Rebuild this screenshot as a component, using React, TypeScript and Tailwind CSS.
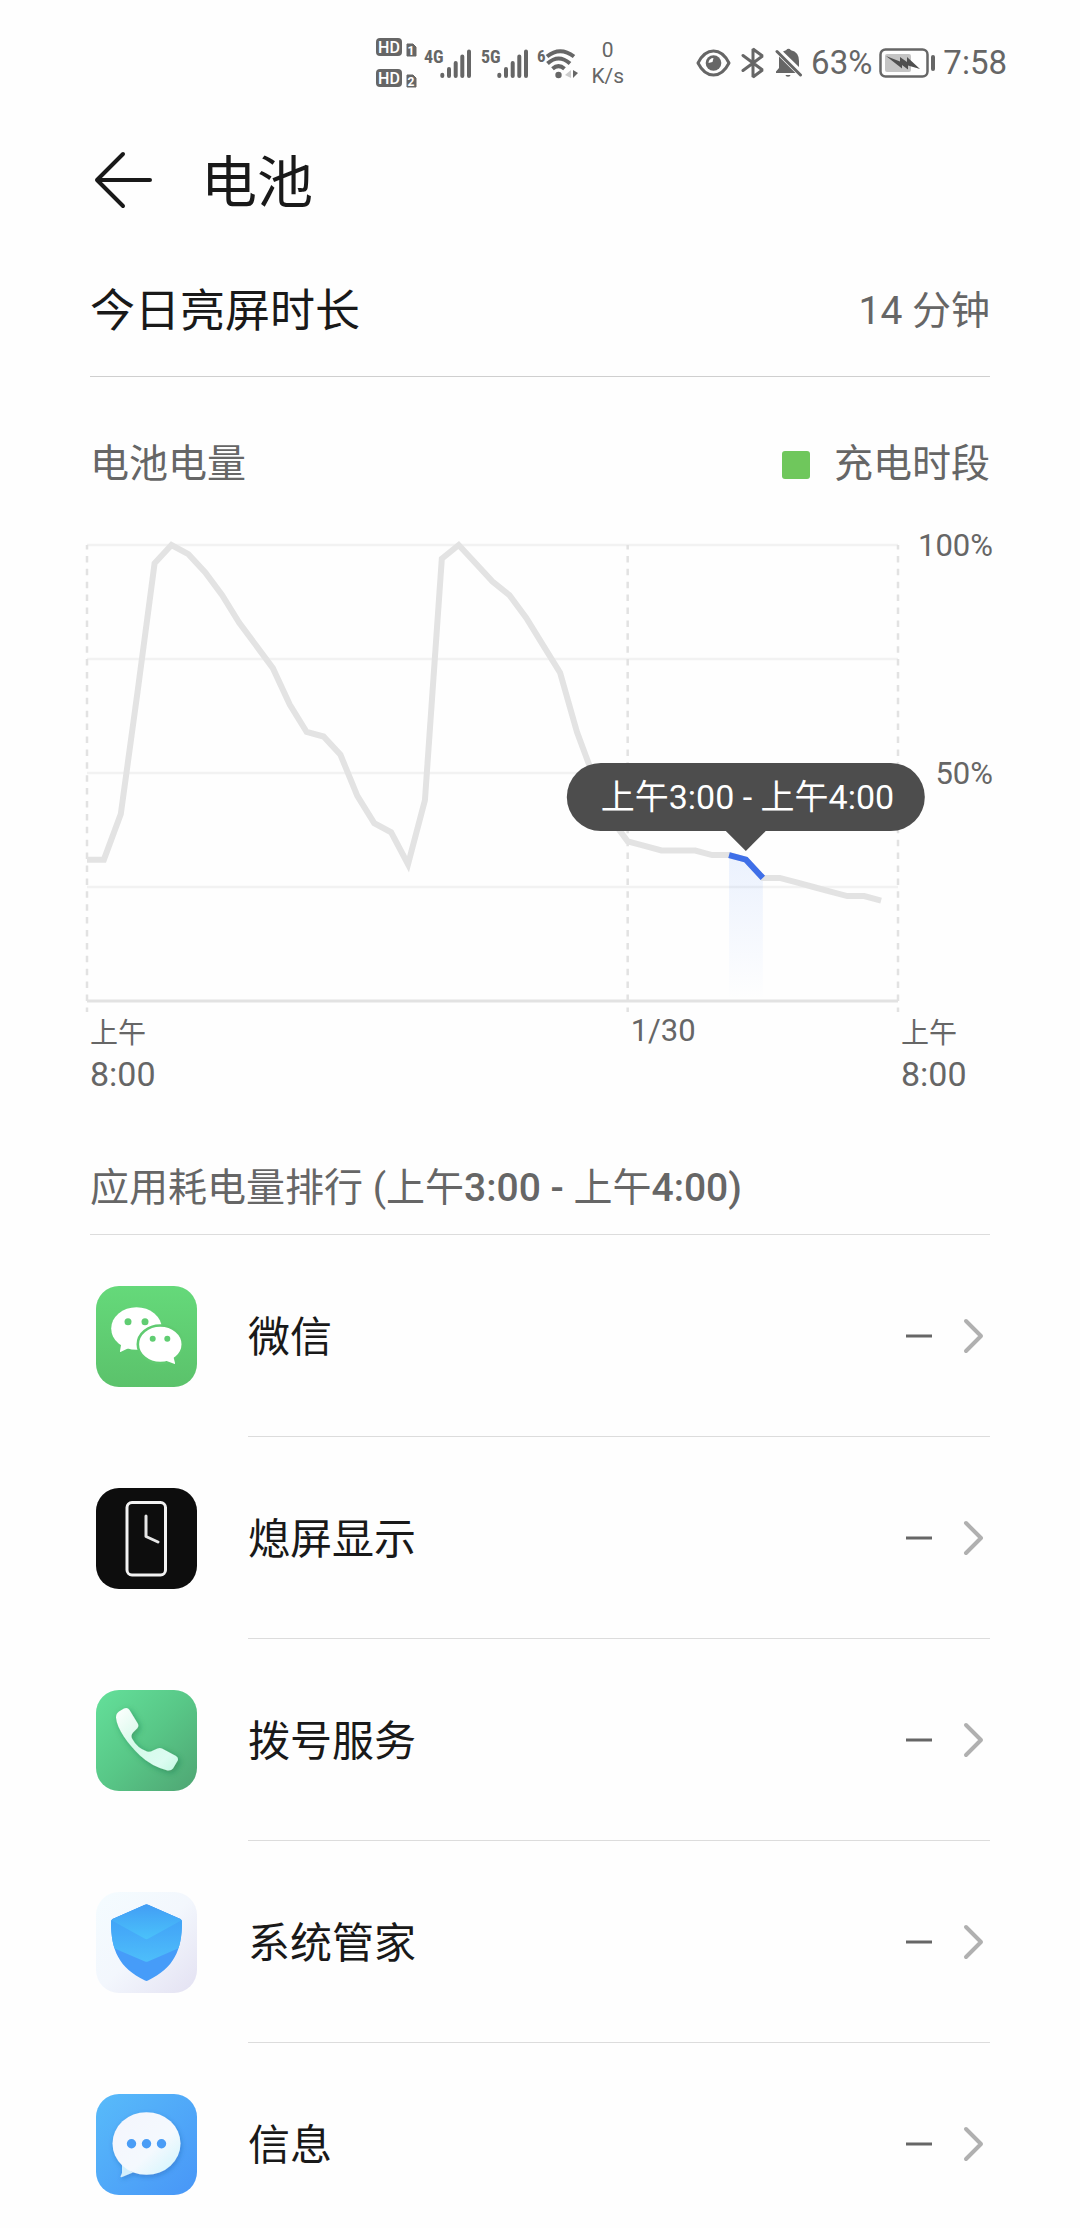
import React from 'react';

// battery level every half hour, from 8:00 two days ago
const LEVELS = [
  31, 31, 41, 68, 96, 100, 98, 94, 89, 83, 78, 73, 65, 59, 58, 54, 45, 39, 37, 30, 44, 97, 100, 96,
  92, 89, 84, 78, 72, 59, 49, 40, 35, 34, 33, 33, 33, 32, 32, 31, 27, 27, 26, 25, 24, 23, 23, 22,
];

const CHART_WIDTH = 811;
const CHART_TOP = 17;
const CHART_BOTTOM = 473;
const SELECTED_START = 38;
const SELECTED_END = 40;

const getX = (index: number) => (index * CHART_WIDTH) / 48;
const getY = (level: number) => CHART_TOP + ((100 - level) * (CHART_BOTTOM - CHART_TOP)) / 100;

const toPoints = (from: number, to: number) =>
  LEVELS.slice(from, to + 1)
    .map((level, i) => `${getX(from + i)},${getY(level)}`)
    .join(' ');

const HdBadge = ({ y, sim }: { y: number; sim: string }) => (
  <g>
    <rect x="0" y={y} width="26" height="18" rx="4" fill="#666" />
    <text x="13" y={y + 15} fontSize="16" fontWeight="500" fill="#fff" textAnchor="middle">
      HD
    </text>
    <path d={`M31 ${y + 6} h6 l3 3 v9 h-9 z`} fill="#666" stroke="#666" strokeLinejoin="round" />
    <text x="35" y={y + 17} fontSize="12" fontWeight="700" fill="#fff" textAnchor="middle">
      {sim}
    </text>
  </g>
);

const Signal = ({ label }: { label: string }) => (
  <svg width="50" height="34" viewBox="0 0 50 34" className="shrink-0">
    <text
      x="1"
      y="17"
      fontSize="18"
      fontWeight="700"
      fill="#666"
      className="font-['Liberation_Sans_Narrow','Roboto_Condensed',Roboto,sans-serif]"
    >
      {label}
    </text>
    <g stroke="#666" strokeWidth="4" strokeLinecap="round">
      <path d="M19.3 28.8v1.2M26 23v7M32.7 17v7v6M39.3 10.500v19.500M46 5.500v24.500" />
    </g>
  </svg>
);

const StatusBar = () => (
  <div className="flex h-[126px] items-center justify-end pr-[73px] text-[#666]">
    <svg width="41" height="52" viewBox="0 0 41 52" className="shrink-0">
      <HdBadge y={1} sim="1" />
      <HdBadge y={32} sim="2" />
    </svg>
    <div className="ml-[6px] flex items-center gap-[7px]">
      <Signal label="4G" />
      <Signal label="5G" />
      <svg width="42" height="34" viewBox="0 0 42 34" fill="none" className="shrink-0">
        <text
          x="0"
          y="16"
          fontSize="17"
          fontWeight="700"
          fill="#666"
          className="font-['Liberation_Sans_Narrow','Roboto_Condensed',Roboto,sans-serif]"
        >
          6
        </text>
        <g stroke="#666" strokeWidth="4">
          <path d="M10 10.500Q23 0 37 10.500" />
          <path d="M10.500 17.500Q21.500 7.500 33 17.500" />
          <path d="M15.500 22.800Q21.500 17.500 27.500 22.800" />
        </g>
        <circle cx="21.500" cy="29" r="3.200" fill="#666" />
        <path d="M34 24v8l-6-3z" fill="#ccc" />
        <path d="M36 24v8l5-5z" fill="#666" />
      </svg>
    </div>
    <div className="ml-3 text-center text-[21px] leading-[26px]">
      <div>0</div>
      <div>K/s</div>
    </div>
    <svg width="35" height="28" viewBox="0 0 35 28" fill="none" className="ml-[72px] shrink-0">
      <path
        d="M2 14C6 6 11 2 17.500 2S29 6 33 14C29 22 24 26 17.500 26S6 22 2 14z"
        stroke="#666"
        strokeWidth="3"
        strokeLinejoin="round"
      />
      <circle cx="17.500" cy="14" r="7.800" fill="#666" />
      <path d="M12.500 14a5 5 0 0 1 5-5l-1 4z" fill="#fff" />
    </svg>
    <svg width="24" height="32" viewBox="0 0 24 32" fill="none" className="ml-[10px] shrink-0">
      <path
        d="M2 8.500L21.500 23L12 30V2L21.500 9L2 23.500"
        stroke="#666"
        strokeWidth="3"
        strokeLinejoin="bevel"
        strokeLinecap="round"
      />
    </svg>
    <svg width="28" height="30" viewBox="0 0 28 30" className="ml-[10px] shrink-0">
      <path d="M8 3.500Q10 2.500 11 2.200Q13.500-.5 16 2.200Q24 4 24 13V19z" fill="#666" />
      <path d="M4 8.500L20.500 25H1V23.500L4 20z" fill="#666" />
      <path d="M2 3.500L25.500 27" stroke="#666" strokeWidth="3" strokeLinecap="round" />
      <path d="M10.500 27h5a2.500 1.800 0 0 1-5 0z" fill="#666" />
    </svg>
    <span className="ml-2 text-[33px]">63%</span>
    <svg width="56" height="30" viewBox="0 0 56 30" className="ml-[7px] shrink-0">
      <rect x="1.500" y="1.500" width="47" height="27" rx="5" fill="none" stroke="#666" strokeWidth="2.500" />
      <rect x="6" y="6" width="26" height="18" rx="2" fill="#c4c4c4" />
      <rect x="52" y="7" width="4" height="16" rx="2" fill="#666" />
      <path d="M7 8L21 13.500L21 9L28 14V9L41 21L29 17.500V21.500L23 17V20.500z" fill="#4f4f4f" />
    </svg>
    <span className="ml-2 text-[33px]">7:58</span>
  </div>
);

const BatteryChart = () => (
  <div className="grid grid-cols-[2fr_1fr_95px] px-[87px] text-[#666]">
    <div className="relative col-span-2">
      <svg viewBox="0 0 811 484" fill="none" className="block w-full overflow-visible">
        <defs>
          <linearGradient id="selected" x1="0" y1="0" x2="0" y2="1">
            <stop offset="0" stopColor="#3f7ff8" stopOpacity="0.1" />
            <stop offset="1" stopColor="#3f7ff8" stopOpacity="0" />
          </linearGradient>
        </defs>
        {[100, 75, 50, 25].map((level) => (
          <path key={level} d={`M0 ${getY(level)}H811`} stroke="#f2f2f2" strokeWidth="2.500" />
        ))}
        {[0, 32, 48].map((index) => (
          <path
            key={index}
            d={`M${getX(index)} ${CHART_TOP}V484`}
            stroke="#e2e2e2"
            strokeWidth="2.500"
            strokeDasharray="6.500 6.400"
            strokeDashoffset="2"
          />
        ))}
        <path d={`M0 ${CHART_BOTTOM}H811`} stroke="#e2e2e2" strokeWidth="3" />
        <polygon
          points={`${toPoints(SELECTED_START, SELECTED_END)} ${getX(SELECTED_END)},${CHART_BOTTOM} ${getX(SELECTED_START)},${CHART_BOTTOM}`}
          fill="url(#selected)"
        />
        <polyline points={toPoints(0, LEVELS.length - 1)} stroke="#e3e3e3" strokeWidth="6" />
        <polyline points={toPoints(SELECTED_START, SELECTED_END)} stroke="#3f6fe8" strokeWidth="6" />
      </svg>
      <div className="absolute left-[81.25%] top-[235px] flex -translate-x-1/2 flex-col items-center">
        <div className="whitespace-nowrap rounded-full bg-[#4d4d4d] pl-[34px] pr-[31px] pt-px text-[34px] leading-[67px] text-white">
          上午3:00 - 上午4:00
        </div>
        <svg width="40" height="20" viewBox="0 0 40 20" fill="#4d4d4d">
          <path d="M0 0H40L20 20z" />
        </svg>
      </div>
    </div>
    <div className="flex flex-col gap-[192px] text-right text-[31px] leading-9">
      <span>100%</span>
      <span>50%</span>
    </div>
    <div className="pl-[3px] pt-px leading-[41px]">
      <div className="text-[28px]">上午</div>
      <div className="text-[34px]">8:00</div>
    </div>
    <div className="pl-[3px] pt-px text-[31px] leading-9">1/30</div>
    <div className="pl-[3px] pt-px leading-[41px]">
      <div className="text-[28px]">上午</div>
      <div className="text-[34px]">8:00</div>
    </div>
  </div>
);

const WeChatIcon = () => (
  <svg width="101" height="101" viewBox="0 0 101 101">
    <defs>
      <linearGradient id="wechat" x1="0" y1="0" x2="0" y2="1">
        <stop offset="0" stopColor="#65d97a" />
        <stop offset="1" stopColor="#5bc26b" />
      </linearGradient>
    </defs>
    <rect width="101" height="101" rx="23" fill="url(#wechat)" />
    <ellipse cx="40.500" cy="42.500" rx="25.300" ry="21.300" fill="#fff" />
    <path d="M25.500 56L24 65q-.3 1.500 1 .8L36 60.500z" fill="#fff" />
    <circle cx="32" cy="35.700" r="3.500" fill="#60cd72" />
    <circle cx="49" cy="35.700" r="3.500" fill="#60cd72" />
    <ellipse cx="64.300" cy="58.300" rx="22.500" ry="18.800" fill="#fff" stroke="#60cb71" strokeWidth="2.600" />
    <path d="M77 69L79 77q.2 1.500-1 .8L68 74z" fill="#fff" />
    <circle cx="56.700" cy="52.700" r="3" fill="#60cd72" />
    <circle cx="71.300" cy="52.700" r="3" fill="#60cd72" />
  </svg>
);

const ScreenOffIcon = () => (
  <svg width="101" height="101" viewBox="0 0 101 101" fill="none">
    <rect width="101" height="101" rx="23" fill="#0d0d0d" />
    <rect x="31" y="14.500" width="38.500" height="72.500" rx="5" stroke="#f2f2f2" strokeWidth="3" />
    <path d="M50 28V48.500L62 54" stroke="#e6e6e6" strokeWidth="3" strokeLinecap="round" strokeLinejoin="round" />
  </svg>
);

const DialerIcon = () => (
  <svg width="101" height="101" viewBox="0 0 101 101">
    <defs>
      <linearGradient id="dialer" x1="0" y1="0" x2="1" y2="1">
        <stop offset="0" stopColor="#64e09a" />
        <stop offset="0.500" stopColor="#58c787" />
        <stop offset="1" stopColor="#4fa573" />
      </linearGradient>
      <linearGradient id="handset" x1="0" y1="0" x2="1" y2="1">
        <stop offset="0" stopColor="#ffffff" />
        <stop offset="0.450" stopColor="#d4f9e9" />
        <stop offset="0.800" stopColor="#dcfcf1" />
        <stop offset="1" stopColor="#c3f8e2" />
      </linearGradient>
      <filter id="handset-shadow" x="-20%" y="-20%" width="150%" height="150%">
        <feDropShadow dx="2" dy="2" stdDeviation="3" floodColor="#1f6b43" floodOpacity="0.450" />
      </filter>
    </defs>
    <rect width="101" height="101" rx="23" fill="url(#dialer)" />
    <path
      d="M20 27.500Q20 23.500 23 21.500L28 18.500Q31.500 17 33.500 20L42 34Q43 36 41.500 38L37 42.500Q34.500 45.500 36 48.500Q41 58 51 61.500Q54 62.500 57 60.500L61.500 58.500Q64 57.500 66 58.500L80 66Q82.500 67.500 82 70L77 78.500Q75 81 71.500 80.500Q55 76 44 65.500C32 54 21 39 20 27.500z"
      fill="url(#handset)"
      filter="url(#handset-shadow)"
    />
  </svg>
);

const ManagerIcon = () => (
  <svg width="101" height="101" viewBox="0 0 101 101">
    <defs>
      <linearGradient id="manager" x1="0" y1="0" x2="1" y2="1">
        <stop offset="0" stopColor="#f4fcff" />
        <stop offset="0.500" stopColor="#f3f7fd" />
        <stop offset="1" stopColor="#e3e1f2" />
      </linearGradient>
      <linearGradient id="shield-top" x1="0" y1="0" x2="0" y2="1">
        <stop offset="0" stopColor="#429df5" />
        <stop offset="1" stopColor="#4ac2fa" />
      </linearGradient>
      <linearGradient id="shield-mid" x1="0" y1="0" x2="0" y2="1">
        <stop offset="0" stopColor="#3f9bf5" />
        <stop offset="0.500" stopColor="#45aaf8" />
        <stop offset="1" stopColor="#4dbefa" />
      </linearGradient>
      <clipPath id="shield">
        <path d="M49 12.800Q50.500 12 52 12.800L84.500 27Q86 28 86 30C86 58 78 76 52 88.500Q50.500 89.300 49 88.500C23 76 15 58 15 30Q15 28 16.500 27z" />
      </clipPath>
    </defs>
    <rect width="101" height="101" rx="23" fill="url(#manager)" />
    <g clipPath="url(#shield)">
      <rect x="14" y="10" width="74" height="80" fill="#469cf9" />
      <path d="M10 10H90V53L52 69.500Q50.500 70 49 69.500L10 53z" fill="url(#shield-mid)" />
      <path d="M15 28L50.500 12L86 28L52 46.800Q50.500 47.500 49 46.800z" fill="url(#shield-top)" />
    </g>
  </svg>
);

const MessageIcon = () => (
  <svg width="101" height="101" viewBox="0 0 101 101">
    <defs>
      <linearGradient id="message" x1="0" y1="0" x2="1" y2="1">
        <stop offset="0" stopColor="#58bbfa" />
        <stop offset="1" stopColor="#4896f7" />
      </linearGradient>
      <linearGradient id="bubble" x1="0" y1="0" x2="1" y2="1">
        <stop offset="0" stopColor="#f4f5fd" />
        <stop offset="0.600" stopColor="#f4f9fe" />
        <stop offset="1" stopColor="#cdf4fc" />
      </linearGradient>
      <filter id="bubble-shadow" x="-20%" y="-20%" width="150%" height="150%">
        <feDropShadow dx="1" dy="2" stdDeviation="2.500" floodColor="#1c4f9c" floodOpacity="0.350" />
      </filter>
    </defs>
    <rect width="101" height="101" rx="23" fill="url(#message)" />
    <g filter="url(#bubble-shadow)">
      <path d="M26 70V79L24.500 82.500Q24.500 83.500 26 83L37 78.500z" fill="#d2effc" />
      <ellipse cx="50.500" cy="49.500" rx="34" ry="31.300" fill="url(#bubble)" />
    </g>
    <circle cx="35.500" cy="49.700" r="4.700" fill="#4a9df6" />
    <circle cx="50.500" cy="49.700" r="4.700" fill="#4a9df6" />
    <circle cx="65.500" cy="49.700" r="4.700" fill="#4a9df6" />
  </svg>
);

const APPS = [
  { name: '微信', icon: <WeChatIcon /> },
  { name: '熄屏显示', icon: <ScreenOffIcon /> },
  { name: '拨号服务', icon: <DialerIcon /> },
  { name: '系统管家', icon: <ManagerIcon /> },
  { name: '信息', icon: <MessageIcon /> },
];

const AppRow = ({ name, icon }: { name: string; icon: React.ReactNode }) => (
  <li>
    <a href="#" className="flex items-center gap-[51px] pl-[6px]">
      <span className="shrink-0">{icon}</span>
      <span className="flex h-[202px] flex-1 items-center border-b border-[#dcdcdc]">
        <span className="flex-1 pt-1 text-[42px] text-[#191919]">{name}</span>
        <svg width="78" height="36" viewBox="0 0 78 36" fill="none" className="mr-[6px]">
          <path d="M0 18H26" stroke="#666" strokeWidth="3" />
          <path
            d="M60 3L75 18L60 33"
            stroke="#b0b0b0"
            strokeWidth="4"
            strokeLinecap="round"
            strokeLinejoin="round"
          />
        </svg>
      </span>
    </a>
  </li>
);

export default function App() {
  return (
    <div
      lang="zh-CN"
      className="min-h-screen w-full overflow-hidden bg-[#fefefe] font-[Roboto,'Noto_Sans_CJK_SC',sans-serif]"
    >
      <StatusBar />
      <header className="flex h-[108px] items-center px-[90px]">
        <button type="button" aria-label="返回" className="ml-[3px]">
          <svg width="60" height="60" viewBox="0 0 60 60" fill="none">
            <path
              d="M57 30H4M30 4L4 30L30 56"
              stroke="#191919"
              strokeWidth="4"
              strokeLinecap="round"
              strokeLinejoin="round"
            />
          </svg>
        </button>
        <h1 className="ml-12 pt-[6px] text-[56px] text-[#191919]">电池</h1>
      </header>

      <main>
        <div className="mx-[90px] flex h-[143px] items-center justify-between border-b border-[#cfcfcf] pt-[13px]">
          <span className="text-[45px] text-[#191919]">今日亮屏时长</span>
          <span className="text-[39px] text-[#666]">14 分钟</span>
        </div>

        <div className="mx-[90px] flex h-[151px] items-center justify-between pt-6 text-[39px] text-[#666]">
          <span>电池电量</span>
          <span className="flex items-center gap-6">
            <span className="size-7 rounded-[3px] bg-[#6fc75c]" />
            充电时段
          </span>
        </div>

        <BatteryChart />

        <h2 className="mx-[90px] h-[140px] border-b border-[#dcdcdc] pt-[63px] text-[39px] leading-[60px] text-[#666]">
          应用耗电量排行 (上午<span className="font-medium">3:00 - </span>上午
          <span className="font-medium">4:00)</span>
        </h2>
        <ul className="mx-[90px]">
          {APPS.map((app) => (
            <AppRow key={app.name} name={app.name} icon={app.icon} />
          ))}
        </ul>
      </main>
    </div>
  );
}
